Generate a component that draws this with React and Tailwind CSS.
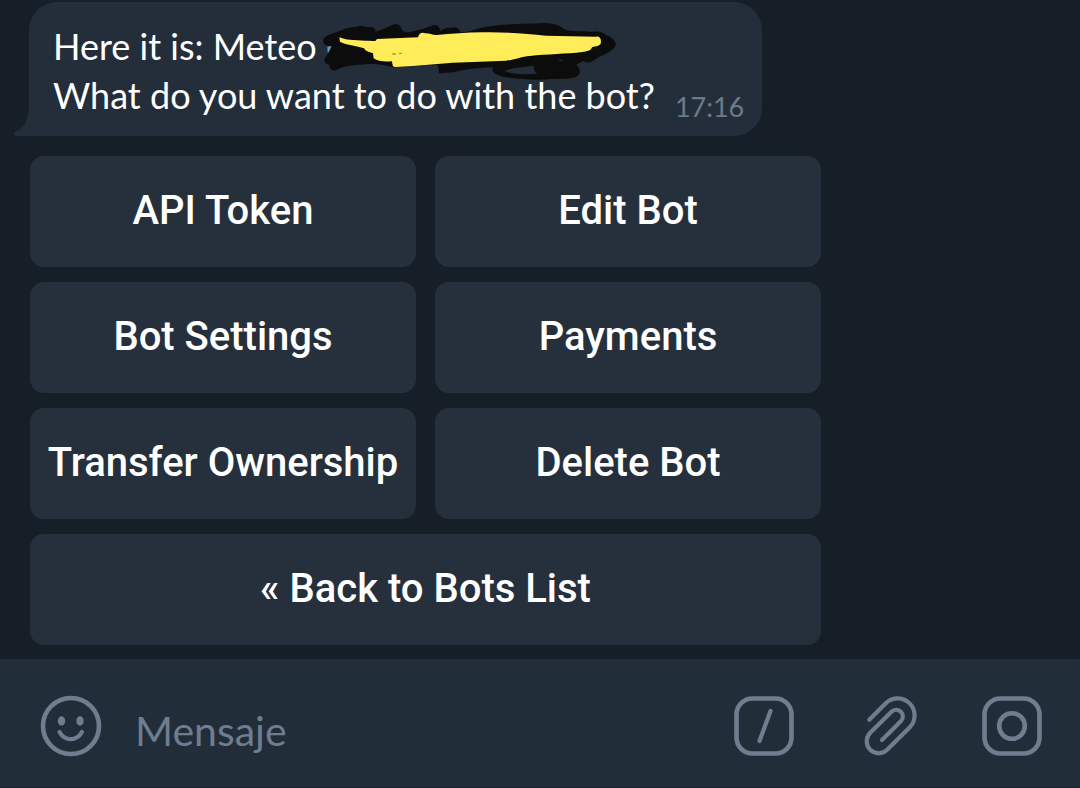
import React from "react";

const keyboard = [
  "API Token",
  "Edit Bot",
  "Bot Settings",
  "Payments",
  "Transfer Ownership",
  "Delete Bot",
];

function Scribble() {
  return (
    <svg
      className="-ml-1 -mt-3 -mb-5 h-20 w-[310px] shrink-0"
      viewBox="0 0 930 240"
      role="img"
      aria-label="Hidden bot name"
    >
      <path d="M43 110l12-2-7 22-4-2z" fill="#5d9bc9" />
      <path
        d="M30 92C30 80 50 72 72 66C92 57 112 50 132 50C143 44 155 51 166 52C180 48 190 56 187 65C204 60 221 53 236 46C250 38 264 44 265 57C272 67 281 69 293 65C315 60 337 55 355 47C369 41 382 48 381 63C391 58 402 51 416 54C426 49 440 54 441 67C470 66 491 55 520 50C560 42 620 43 675 40C705 37 736 42 754 58C770 66 805 62 835 66C852 62 872 65 881 77C894 78 909 94 909 105C903 118 884 130 862 139L835 155C826 160 817 157 810 153C804 159 794 160 790 165C803 174 803 188 796 196C785 208 750 207 716 207C670 212 615 207 568 200C549 195 533 187 539 172C500 173 454 178 421 187L378 190L375 165L240 172L210 165C180 160 150 163 126 166C103 166 84 173 69 181C57 184 49 176 49 165C31 159 31 147 40 139C45 127 54 119 56 108C39 109 30 101 30 92Z"
        fill="#0c0c0d"
      />
      <path
        d="M574 183C592 173 626 172 663 167C662 176 662 183 673 191C640 194 600 193 574 183Z"
        fill="#232e3a"
      />
      <path d="M735 153C740 149 747 148 753 150C748 153 741 154 735 153Z" fill="#232e3a" />
      <path
        d="M79 82L98 88C130 92 163 93 187 93L192 87L315 82C317 70 327 65 337 70C351 70 360 76 371 75C415 72 460 67 510 67C570 66 640 70 698 77L849 80C862 77 866 91 863 101C857 110 842 109 837 112C834 123 821 124 808 126C760 132 702 132 650 138C625 140 607 149 579 152L420 158L300 168L248 171C239 173 238 163 237 154C217 156 194 155 182 145L180 130C170 126 160 126 153 115C134 108 94 104 81 95Z"
        fill="#feec58"
      />
      <path d="M239 132h8m13-2h5" stroke="#a99735" strokeWidth="4" strokeLinecap="round" />
    </svg>
  );
}

function Icon({ children }) {
  return (
    <svg
      className="block size-16"
      viewBox="0 0 64 64"
      fill="none"
      stroke="currentColor"
      strokeWidth="4.6"
      strokeLinecap="round"
      strokeLinejoin="round"
      aria-hidden="true"
    >
      {children}
    </svg>
  );
}

function KeyButton({ children, wide }) {
  return (
    <button
      type="button"
      className={
        wide
          ? "col-span-2 h-[111px] rounded-[14px] bg-[#26303c] pb-0.5 text-[40px] font-medium text-white"
          : "h-[111px] whitespace-nowrap rounded-[14px] bg-[#26303c] pb-0.5 text-[40px] font-medium text-white"
      }
    >
      {children}
    </button>
  );
}

export default function App() {
  return (
    <div className="flex min-h-screen flex-col bg-[#161e27] font-[Roboto,sans-serif]">
      <main className="flex grow flex-col items-start px-[30px] pt-0.5 pb-3.5">
        <article className="relative -ml-px rounded-[28px] rounded-bl-none bg-[#232e3a] pt-5 pr-[18px] pb-4 pl-6 font-[Lato,sans-serif] text-[36px] leading-[49px] text-white">
          <svg
            className="absolute bottom-0 -left-[15px] h-8 w-4 text-[#232e3a]"
            viewBox="0 0 16 32"
            fill="currentColor"
            aria-hidden="true"
          >
            <path d="M16 0H15C15 14 10 25 1 28C-.5 29 0 32 2 32H16Z" />
          </svg>
          <p className="flex items-start whitespace-nowrap">
            Here it is: Meteo
            <Scribble />
          </p>
          <div className="flex items-end gap-5 whitespace-nowrap">
            <p>What do you want to do with the bot?</p>
            <time className="-mb-2 text-[27px] leading-[42px] text-[#6c7a8b]">17:16</time>
          </div>
        </article>
        <div className="mt-5 grid w-full max-w-[791px] grid-cols-2 gap-x-[19px] gap-y-[15px]">
          {keyboard.map((label) => (
            <KeyButton key={label}>{label}</KeyButton>
          ))}
          <KeyButton wide>« Back to Bots List</KeyButton>
        </div>
      </main>
      <form
        className="flex h-[129px] shrink-0 items-center border-b border-[#1f2230] bg-[#222d3a] pr-9 pl-[39px] pt-1.5 text-[#6f7d8f]"
        onSubmit={(e) => e.preventDefault()}
      >
        <button type="button" aria-label="Emoji">
          <Icon>
            <circle cx="32" cy="32" r="28" />
            <path d="M20.5 38C26 47.500 37.500 47.500 43 38" strokeWidth="4.2" />
            <ellipse cx="22.5" cy="27" rx="3.7" ry="4.7" fill="currentColor" stroke="none" />
            <ellipse cx="41" cy="27" rx="3.7" ry="4.7" fill="currentColor" stroke="none" />
          </Icon>
        </button>
        <input
          type="text"
          aria-label="Mensaje"
          placeholder="Mensaje"
          className="ml-8 h-16 min-w-0 grow bg-transparent pt-2 font-[Lato,sans-serif] text-[41px] text-white outline-none placeholder:text-[#6f7d8f]"
        />
        <div className="flex shrink-0 gap-[60px]">
          <button type="button" aria-label="Commands">
            <Icon>
              <rect x="4.5" y="4.5" width="55" height="55" rx="16" />
              <path d="M38.5 17L27.5 47" strokeWidth="4.2" />
            </Icon>
          </button>
          <button type="button" aria-label="Attach">
            <Icon>
              <path
                d="M13.3 25.7L30.3 8.7A17 17 0 0 1 54.3 32.7L31.2 55.8A12 12 0 0 1 14.2 38.8L36 17.3A6.65 6.65 0 0 1 45.3 26.7L26 46"
                strokeWidth="4.2"
              />
            </Icon>
          </button>
          <button type="button" aria-label="Camera">
            <Icon>
              <rect x="4.5" y="4.5" width="55" height="55" rx="16" />
              <circle cx="32" cy="32" r="12.8" />
            </Icon>
          </button>
        </div>
      </form>
    </div>
  );
}
